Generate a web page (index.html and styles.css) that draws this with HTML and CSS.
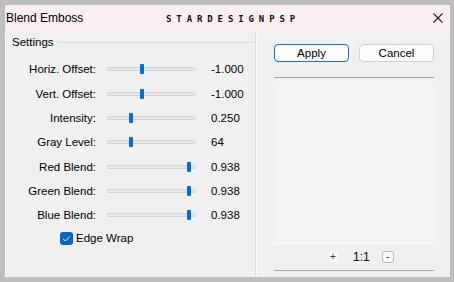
FILE: index.html
```html
<!DOCTYPE html>
<html>
<head>
<meta charset="utf-8">
<link rel="stylesheet" href="styles.css">
</head>
<body>
<div class="window">
  <div class="titlebar">
    <div class="title">Blend Emboss</div>
    <div class="watermark">STARDESIGNPSP</div>
    <svg class="close" width="10" height="10" viewBox="0 0 10 10"><path d="M0.5 0.5 L9.5 9.5 M9.5 0.5 L0.5 9.5" stroke="#222" stroke-width="1.1" fill="none"/></svg>
  </div>
  <div class="content">
    <div class="settings">
      <div class="legend"><span class="legend-text">Settings</span><span class="legend-line"></span></div>
      <div class="rows">
        <div class="row"><span class="label">Horiz. Offset:</span><span class="track"><span class="thumb" style="left:32px"></span></span><span class="value">-1.000</span></div>
        <div class="row"><span class="label">Vert. Offset:</span><span class="track"><span class="thumb" style="left:32px"></span></span><span class="value">-1.000</span></div>
        <div class="row"><span class="label">Intensity:</span><span class="track"><span class="thumb" style="left:21px"></span></span><span class="value">0.250</span></div>
        <div class="row"><span class="label">Gray Level:</span><span class="track"><span class="thumb" style="left:21px"></span></span><span class="value">64</span></div>
        <div class="row"><span class="label">Red Blend:</span><span class="track"><span class="thumb" style="left:79px"></span></span><span class="value">0.938</span></div>
        <div class="row"><span class="label">Green Blend:</span><span class="track"><span class="thumb" style="left:79px"></span></span><span class="value">0.938</span></div>
        <div class="row"><span class="label">Blue Blend:</span><span class="track"><span class="thumb" style="left:79px"></span></span><span class="value">0.938</span></div>
      </div>
      <div class="check-row">
        <span class="checkbox"><svg width="13" height="13" viewBox="0 0 13 13"><path d="M3.2 6.8 L5.4 9 L9.8 4.4" stroke="#fff" stroke-width="1" fill="none"/></svg></span>
        <span class="check-label">Edge Wrap</span>
      </div>
    </div>
    <div class="side">
      <div class="buttons">
        <button class="btn primary">Apply</button>
        <button class="btn">Cancel</button>
      </div>
      <div class="sep"></div>
      <div class="preview"></div>
      <div class="zoom">
        <span class="zbtn plus">+</span>
        <span class="ratio">1:1</span>
        <span class="zbtn minus">-</span>
      </div>
      <div class="sep bottom"></div>
    </div>
  </div>
</div>
</body>
</html>
```

FILE: styles.css
```css
* { box-sizing: border-box; }
html, body { margin: 0; padding: 0; }
body {
  width: 454px;
  height: 282px;
  overflow: hidden;
  font-family: "Liberation Sans", Arial, sans-serif;
  font-size: 11.5px;
  color: #000;
}
.window {
  width: 454px;
  height: 282px;
  background: #bebebe;
  padding: 5px 4px 5px 5px;
  display: flex;
  flex-direction: column;
}
.titlebar {
  height: 28px;
  background: #f9eff1;
  display: flex;
  align-items: center;
  position: relative;
  padding-left: 1px;
}
.title {
  font-size: 12px;
  padding-bottom: 2px;
}
.watermark {
  position: absolute;
  left: 161px;
  top: 9px;
  font-family: "DejaVu Sans Mono", monospace;
  font-weight: bold;
  font-size: 9px;
  letter-spacing: 4.9px;
  color: #111;
}
.close {
  position: absolute;
  left: 428px;
  top: 8px;
}
.content {
  flex: 1;
  background: #f0f0f0;
  display: flex;
  border-left: 1px solid #fafafa;
}
.settings {
  width: 250px;
  border-right: 1px solid #dcdcdc;
  position: relative;
  padding-top: 3px;
}
.legend {
  display: flex;
  align-items: center;
  height: 12px;
}
.legend-text {
  padding-left: 6px;
  padding-right: 4px;
}
.legend-line {
  flex: 1;
  height: 1px;
  background: #dcdcdc;
  margin-top: 1px;
}
.rows {
  margin-top: 9px;
  display: flex;
  flex-direction: column;
}
.row {
  height: 24.35px;
  display: grid;
  grid-template-columns: 90px 89px auto;
  align-items: center;
}
.label {
  text-align: right;
}
.track {
  margin-left: 11px;
  width: 89px;
  height: 4px;
  background: #e6e6e6;
  border: 1px solid #d4d4d4;
  border-radius: 2px;
  position: relative;
}
.thumb {
  position: absolute;
  top: -4px;
  width: 4px;
  height: 10px;
  background: #0a6ccd;
  border-radius: 1px;
}
.value {
  padding-left: 26px;
}
.check-row {
  display: flex;
  align-items: center;
  margin-top: 4px;
  padding-left: 54px;
  height: 14px;
}
.checkbox {
  width: 13px;
  height: 13px;
  background: #0a64c4;
  border-radius: 3px;
  display: block;
}
.checkbox svg { display: block; }
.check-label {
  margin-left: 3px;
}
.side {
  flex: 1;
  border-left: 1px solid #fbfbfb;
  padding: 11px 16px 0 17px;
  display: flex;
  flex-direction: column;
}
.buttons {
  display: flex;
  gap: 10px;
}
.btn {
  width: 75px;
  height: 18px;
  font-family: inherit;
  font-size: 11.5px;
  background: #fdfdfd;
  border: 1px solid #d0d0d0;
  border-radius: 4px;
  padding: 0;
  color: #000;
}
.btn.primary {
  border-color: #1a6fc8;
}
.sep {
  height: 1px;
  background: #a0a0a0;
  margin-top: 15px;
}
.preview {
  margin-top: 4px;
  height: 162px;
  background: #f3f3f3;
  border-bottom: 1px solid #ffffff;
}
.zoom {
  height: 26px;
  display: flex;
  align-items: center;
  padding-left: 54px;
}
.zbtn {
  width: 10px;
  height: 11px;
  font-size: 10px;
  line-height: 10px;
  display: flex;
  justify-content: center;
  align-items: center;
  color: #333;
}
.zbtn.plus {
  background: #f9f9f9;
  border-radius: 2px;
}
.zbtn.minus {
  width: 12px;
  height: 12px;
  border: 1px solid #b8b8b8;
  border-radius: 3px;
  background: #fafafa;
}
.ratio {
  margin: 0 12px 0 15px;
  font-size: 12px;
}
.sep.bottom {
  margin-top: 0;
  background: #a8a8a8;
}
```
